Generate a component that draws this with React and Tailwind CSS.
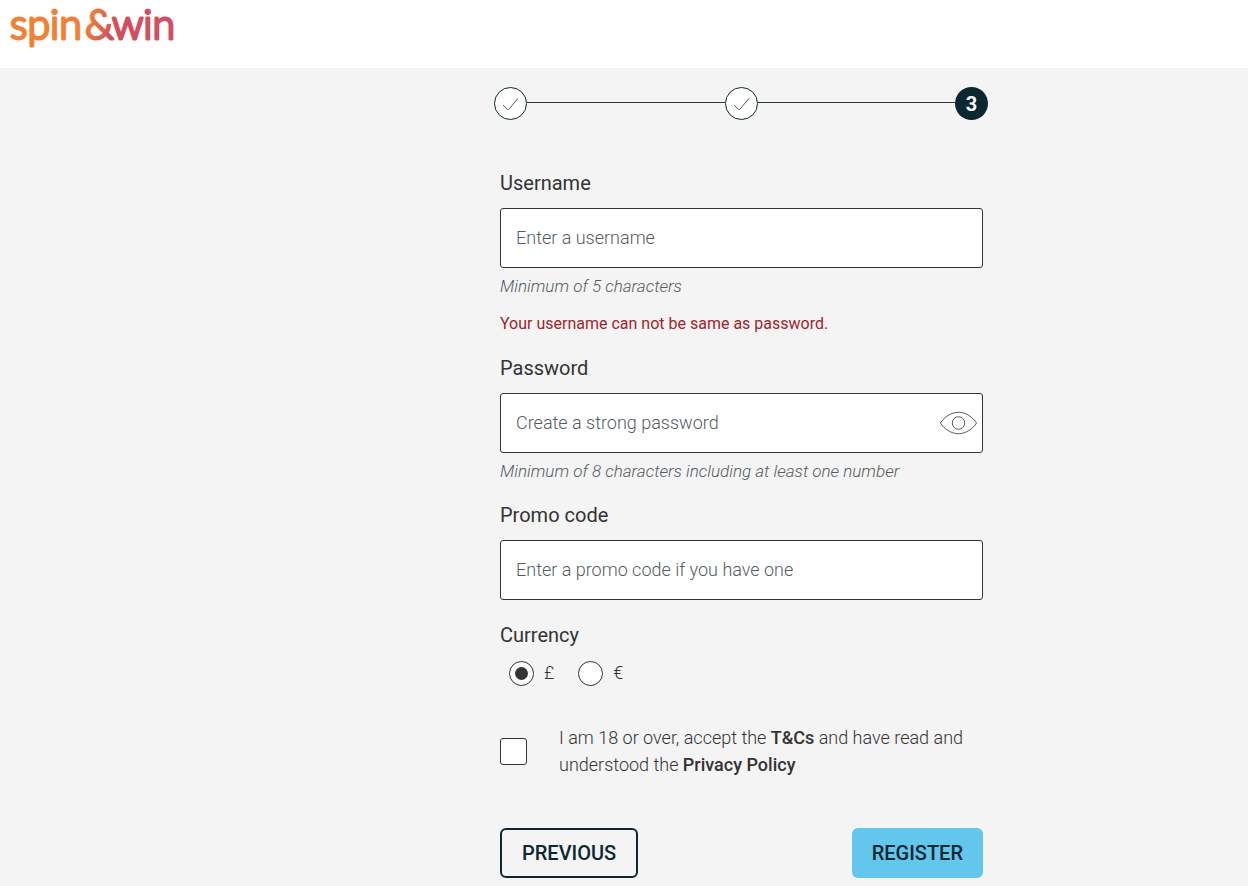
import { useState } from 'react';

function Logo() {
  return (
    <svg width="176" height="52" viewBox="0 0 176 52" role="img" aria-label="spin&win" className="block">
      <defs>
        <linearGradient id="brand" gradientUnits="userSpaceOnUse" x1="88" y1="20" x2="114" y2="30">
          <stop offset="0" stopColor="#f08137" />
          <stop offset="1" stopColor="#d04f60" />
        </linearGradient>
      </defs>
      <text
        y="39"
        fill="url(#brand)"
        stroke="url(#brand)"
        strokeWidth="2.8"
        strokeLinejoin="round"
        className="font-['Lato',sans-serif] text-[41px] font-light"
      >
        <tspan x="10">spin</tspan>
        <tspan x="85">&amp;</tspan>
        <tspan x="112">win</tspan>
      </text>
    </svg>
  );
}

function DoneStep() {
  return (
    <li className="flex size-[33px] shrink-0 items-center justify-center rounded-full border border-[#0d2730] bg-white">
      <svg width="17" height="14" viewBox="0 0 17 14" fill="none" stroke="#555b60" strokeWidth="1" aria-label="Completed" className="mt-px">
        <path d="M1 8 L5.2 12.3 Q6.2 13.2 7.1 12 L16 1.3" />
      </svg>
    </li>
  );
}

const labelClass = 'block text-xl leading-[30px] text-[#333]';
const inputClass =
  'mt-2.5 block h-[60px] w-full rounded-[3px] border border-[#333] bg-white px-[15px] pb-0.5 text-lg font-light text-[#333] outline-none placeholder:text-[#555b61] placeholder:opacity-100';
const hintClass = 'mt-1.5 text-[17px] leading-6 font-light italic text-[#555b61]';
const radioClass =
  "flex size-[25px] appearance-none items-center justify-center rounded-full border border-[#333] bg-white checked:before:size-[13px] checked:before:rounded-full checked:before:bg-[#333] checked:before:content-['']";

export default function App() {
  const [visible, setVisible] = useState(false);
  return (
    <div className="min-h-screen bg-[#f4f4f4] font-['Roboto',sans-serif] text-[#333]">
      <header className="h-[68px] bg-white">
        <a href="#home" className="inline-block">
          <Logo />
        </a>
      </header>
      <main className="grid grid-cols-[500fr_483fr_265fr] pt-[19px] pb-2">
        <form className="col-start-2" onSubmit={(e) => e.preventDefault()}>
          <ol className="-mr-[5px] -ml-1.5 flex items-center">
            <DoneStep />
            <li aria-hidden="true" className="mb-0.5 h-px flex-1 bg-[#333]" />
            <DoneStep />
            <li aria-hidden="true" className="mb-0.5 h-px flex-1 bg-[#333]" />
            <li className="flex size-[33px] shrink-0 items-center justify-center rounded-full bg-[#0d2730] text-xl font-bold text-white">
              3
            </li>
          </ol>

          <label htmlFor="username" className={`mt-12 ${labelClass}`}>Username</label>
          <input id="username" type="text" placeholder="Enter a username" className={inputClass} />
          <p className={hintClass}>Minimum of 5 characters</p>
          <p className="mt-3.5 text-base leading-6 text-[#a1232b]">
            Your username can not be same as password.
          </p>

          <label htmlFor="password" className={`mt-[17px] ${labelClass}`}>Password</label>
          <div className="relative">
            <input
              id="password"
              type={visible ? 'text' : 'password'}
              placeholder="Create a strong password"
              className={inputClass}
            />
            <button
              type="button"
              aria-label="Show password"
              onClick={() => setVisible(!visible)}
              className="absolute inset-y-0 right-[5px] flex items-center"
            >
              <svg width="39" height="26" viewBox="0 0 40 26" fill="none" stroke="#555" strokeWidth="1">
                <path d="M1.5 13 C5 7.5 12 2 20 2 C28 2 35 7.5 38.5 13 C35 18.5 28 24 20 24 C12 24 5 18.5 1.5 13 Z" />
                <circle cx="20" cy="13" r="6.4" />
              </svg>
            </button>
          </div>
          <p className={hintClass}>Minimum of 8 characters including at least one number</p>

          <label htmlFor="promo" className={`mt-[17px] ${labelClass}`}>Promo code</label>
          <input id="promo" type="text" placeholder="Enter a promo code if you have one" className={inputClass} />

          <fieldset className="mt-5">
            <legend className={labelClass}>Currency</legend>
            <div className="mt-2.5 flex gap-6 pl-[9px] text-lg leading-[26px] font-light">
              <label className="flex items-center gap-2.5">
                <input type="radio" name="currency" defaultChecked className={radioClass} />
                £
              </label>
              <label className="flex items-center gap-2.5">
                <input type="radio" name="currency" className={radioClass} />
                €
              </label>
            </div>
          </fieldset>

          <div className="mt-[38px] flex items-center gap-8">
            <input
              id="terms"
              type="checkbox"
              className="size-[27px] shrink-0 appearance-none rounded-[3px] border border-[#333] bg-white checked:bg-[#333]"
            />
            <label htmlFor="terms" className="text-lg leading-[27px] font-light">
              I am 18 or over, accept the <a href="#terms-and-conditions" className="font-medium">T&amp;Cs</a> and have
              read and understood the <a href="#privacy" className="font-medium">Privacy Policy</a>
            </label>
          </div>

          <div className="mt-[50px] flex justify-between">
            <button
              type="button"
              className="h-[50px] rounded-md border-2 border-[#0d2730] px-5 text-xl font-medium text-[#0d2730]"
            >
              PREVIOUS
            </button>
            <button type="submit" className="h-[50px] rounded-md bg-[#63c6ec] px-5 text-xl font-medium text-[#0d2730]">
              REGISTER
            </button>
          </div>
        </form>
      </main>
    </div>
  );
}
